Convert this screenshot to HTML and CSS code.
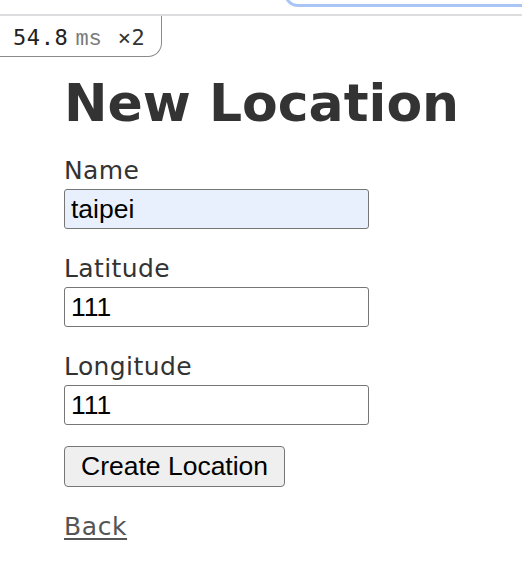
FILE: index.html
```html
<!DOCTYPE html>
<html lang="en">
<head>
<meta charset="utf-8">
<title>New Location</title>
<link rel="stylesheet" href="styles.css">
</head>
<body>
  <div class="topbar"><div class="focus-ring"></div></div>
  <div class="timing"><span class="val">54.8</span><span class="unit">ms</span><span class="count">×2</span></div>
  <main class="page">
    <h1 class="title">New Location</h1>
    <form class="form">
      <div class="field">
        <label class="label" for="name">Name</label>
        <input class="input autofilled" id="name" type="text" value="taipei">
      </div>
      <div class="field">
        <label class="label" for="lat">Latitude</label>
        <input class="input" id="lat" type="text" value="111">
      </div>
      <div class="field field-last">
        <label class="label" for="lng">Longitude</label>
        <input class="input" id="lng" type="text" value="111">
      </div>
      <div class="actions">
        <button class="button" type="button">Create Location</button>
      </div>
    </form>
    <div class="back"><a class="link" href="#">Back</a></div>
  </main>
</body>
</html>
```

FILE: styles.css
```css
html, body {
  margin: 0;
  padding: 0;
  background: #ffffff;
}

body {
  font-family: "DejaVu Sans", Verdana, sans-serif;
  color: #333333;
  overflow: hidden;
}

.topbar {
  position: relative;
  height: 14px;
  border-bottom: 2px solid #dddde0;
  overflow: hidden;
}

.focus-ring {
  position: absolute;
  left: 284px;
  top: -30px;
  width: 320px;
  height: 37px;
  box-sizing: border-box;
  border: 3px solid #a9c5f6;
  border-radius: 14px;
}

.timing {
  display: inline-flex;
  align-items: baseline;
  padding: 3px 16px 0 13px;
  height: 37px;
  line-height: 37px;
  border-right: 1.5px solid #8a8a8a;
  border-bottom: 1.5px solid #8a8a8a;
  border-bottom-right-radius: 14px;
  font-size: 22px;
}

.val {
  font-family: "DejaVu Sans Mono", monospace;
  color: #222222;
  letter-spacing: 0.6px;
}

.unit {
  font-family: "Liberation Mono", monospace;
  color: #7a7a7a;
  margin-left: 7px;
}

.count {
  font-family: "DejaVu Sans Mono", monospace;
  color: #333333;
  margin-left: 16px;
  letter-spacing: 0.5px;
}

.page {
  padding-left: 64px;
}

.title {
  margin: 16px 0 24px;
  font-size: 52px;
  line-height: 60px;
  font-weight: bold;
  color: #333333;
}

.form {
  display: flex;
  flex-direction: column;
}

.field {
  display: flex;
  flex-direction: column;
  align-items: flex-start;
  gap: 4px;
  margin-bottom: 26px;
}

.field-last {
  margin-bottom: 21px;
}

.label {
  font-size: 25px;
  line-height: 28px;
  letter-spacing: 0.4px;
  color: #333333;
}

.input {
  box-sizing: border-box;
  width: 305px;
  height: 40px;
  margin: 0;
  padding: 0 6px;
  border: 1.5px solid #767676;
  border-radius: 3px;
  background: #ffffff;
  font-family: "Liberation Sans", Arial, sans-serif;
  font-size: 26.5px;
  color: #000000;
  outline: none;
}

.input.autofilled {
  background: #e8f0fe;
}

.actions {
  display: flex;
}

.button {
  box-sizing: border-box;
  height: 41px;
  margin: 0;
  padding: 0 16px;
  border: 1.5px solid #767676;
  border-radius: 4px;
  background: #efefef;
  font-family: "Liberation Sans", Arial, sans-serif;
  font-size: 26.5px;
  color: #000000;
}

.back {
  margin-top: 26px;
  font-size: 25px;
  line-height: 28px;
  letter-spacing: 0.6px;
}

.link {
  color: #555555;
  text-decoration: underline;
  text-decoration-thickness: 2px;
  text-underline-offset: 3px;
}
```
